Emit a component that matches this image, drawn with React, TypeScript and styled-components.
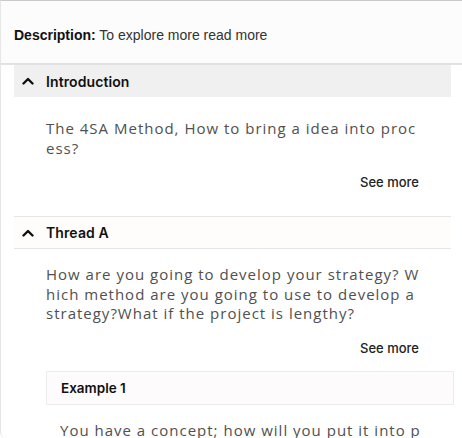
import React from "react";
import styled, { createGlobalStyle } from "styled-components";

const Global = createGlobalStyle`
  html, body { margin: 0; padding: 0; background: #ffffff; }
  body { overflow: hidden; }
`;

const Card = styled.div`
  box-sizing: border-box;
  width: 470px;
  height: 438px;
  border-top: 1px solid #c9c9c9;
  border-left: 1px solid #e6e6e6;
  border-bottom-left-radius: 6px;
  overflow: hidden;
  background: #ffffff;
`;

const Header = styled.div`
  box-sizing: border-box;
  height: 64px;
  padding: 26px 13px 0;
  background: #fcfcfc;
  border-bottom: 2px solid #e2e2e2;
  font-family: "Liberation Sans", Arial, sans-serif;
  font-size: 14px;
  color: #333;
  line-height: 17px;
`;

const Label = styled.span`
  font-weight: 700;
  color: #111;
`;

const Content = styled.div`
  padding: 0 19px 0 13px;
`;

const SectionHead = styled.div<{ $variant: "grey" | "light" }>`
  box-sizing: border-box;
  display: flex;
  align-items: center;
  gap: 12px;
  height: ${(p) => (p.$variant === "grey" ? "32px" : "33px")};
  padding-left: 8px;
  background: ${(p) => (p.$variant === "grey" ? "#f0f0f0" : "#fffcfc")};
  border-top: ${(p) => (p.$variant === "grey" ? "none" : "1px solid #e6e6e6")};
  border-bottom: ${(p) => (p.$variant === "grey" ? "none" : "1px solid #e6e6e6")};
  font-family: "Inter", "Noto Sans", sans-serif;
  font-weight: 600;
  font-size: 14px;
  letter-spacing: 0.1px;
  color: #111;
`;

const Body = styled.p<{ $top: number; $left?: number }>`
  margin: ${(p) => p.$top}px 27px 0 ${(p) => p.$left ?? 32}px;
  font-family: "Open Sans", sans-serif;
  font-size: 15px;
  line-height: 19.5px;
  letter-spacing: 1px;
  color: #505050;
  word-break: break-all;
`;

const SeeMore = styled.div<{ $bottom: number }>`
  display: flex;
  justify-content: flex-end;
  margin: 16px 32px ${(p) => p.$bottom}px 0;
  font-family: "Inter", "Noto Sans", sans-serif;
  font-weight: 500;
  font-size: 13px;
  line-height: 16px;
  color: #222;
`;

const ExampleBox = styled.div`
  box-sizing: border-box;
  display: flex;
  align-items: center;
  height: 34px;
  margin: 0 -3px 0 32px;
  padding-left: 14px;
  background: #fdfbfb;
  border: 1px solid #ececec;
  font-family: "Inter", "Noto Sans", sans-serif;
  font-weight: 600;
  font-size: 13.5px;
  color: #111;
`;

const Chevron = () => (
  <svg width="12" height="8" viewBox="0 0 12 8" fill="none">
    <polyline points="1.5,6.5 6,2 10.5,6.5" stroke="#111" strokeWidth="2.4" strokeLinecap="round" strokeLinejoin="round" />
  </svg>
);

export default function App() {
  return (
    <>
      <Global />
      <Card>
        <Header>
          <Label>Description:</Label> To explore more read more
        </Header>
        <Content>
          <SectionHead $variant="grey">
            <Chevron />
            Introduction
          </SectionHead>
          <Body $top={22}>The 4SA Method, How to bring a idea into process?</Body>
          <SeeMore $bottom={26}>See more</SeeMore>
          <SectionHead $variant="light">
            <Chevron />
            Thread A
          </SectionHead>
          <Body $top={16}>
            How are you going to develop your strategy? Which method are you going to use to develop a strategy?What if the project is lengthy?
          </Body>
          <SeeMore $bottom={15}>See more</SeeMore>
          <ExampleBox>Example 1</ExampleBox>
          <Body $top={16} $left={46}>
            You have a concept; how will you put it into practice? What are the steps?
          </Body>
        </Content>
      </Card>
    </>
  );
}
